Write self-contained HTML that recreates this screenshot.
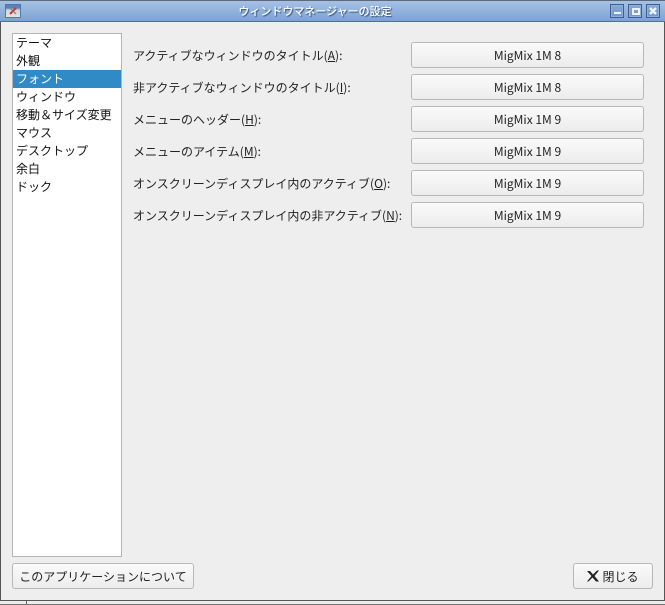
<!DOCTYPE html>
<html lang="ja"><head><meta charset="utf-8"><style>
html,body{margin:0;padding:0}
body{width:665px;height:605px;position:relative;overflow:hidden;background:#eeeeee;font:12px/18px "Noto Sans CJK JP","Liberation Sans",sans-serif;color:#1a1a1a}
.a{position:absolute;white-space:nowrap}
#tb{left:0;top:0;width:665px;background:linear-gradient(#a5c2e6,#7da2d3);border-top:1px solid #5e6a7c;border-bottom:1px solid #4f6f9c;height:20px}
#t{left:0;top:2px;width:630px;text-align:center;color:#fff;font-size:11px;font-weight:500;line-height:18px;text-shadow:1px 1px 1px #2f4f7c}
.wb{top:4px;width:12px;height:12px;border:1px solid #3d5f8e;box-shadow:inset 0 0 0 1px #8fb0da;background:linear-gradient(#86a8d6,#7297cc)}
#l{left:12px;top:33px;width:108px;height:522px;background:#fff;border:1px solid #b4b4b4}
.li{left:13px;width:108px;height:18px;line-height:18px;padding-left:3px;box-sizing:border-box;color:#111}
.sel{background:#2f8ac6;color:#fff}
.lb{left:133px;line-height:18px;color:#222}
.lb u{text-underline-offset:1px}
.b{left:411px;width:233px;height:26px;box-sizing:border-box;border:1px solid #b8b8b8;border-radius:3px;background:linear-gradient(#fafafa,#ececec);text-align:center;line-height:26px;color:#222;font-family:"Noto Sans CJK JP",sans-serif}
#edgeL{left:0;top:22px;width:1px;height:578px;background:#555}
#edgeR{left:664px;top:22px;width:1px;height:578px;background:#555}
#edgeB{left:0;top:600px;width:665px;height:1px;background:#555}
#edgeB2{left:0;top:601px;width:665px;height:3px;background:#ececec}
#edgeB3{left:0;top:604px;width:665px;height:1px;background:#777}
</style></head><body>
<div class="a" id="tb"></div>
<div class="a" style="left:5px;top:4px;width:16px;height:14px;background:linear-gradient(#5a82b6 0,#5a82b6 3px,#cfd6dc 5px,#e6e4de);border:1px solid #4f79ad;box-sizing:border-box"></div>
<svg class="a" style="left:5px;top:4px" width="16" height="14" viewBox="0 0 16 14"><path d="M5 10l6-6" stroke="#c23a48" stroke-width="2" fill="none"/><path d="M5 4l2 2M9 8l2 2" stroke="#8a8a8a" stroke-width="1.500" fill="none"/></svg>
<div class="a" id="t">ウィンドウマネージャーの設定</div>
<div class="a wb" style="left:610px"></div><div class="a" style="left:614px;top:12px;width:7px;height:2px;background:#f0f4fa"></div>
<div class="a wb" style="left:628px"></div><div class="a" style="left:632px;top:8px;width:4px;height:3px;border:2px solid #f0f4fa;border-top-width:2px"></div>
<div class="a wb" style="left:646px"></div>
<svg class="a" style="left:646px;top:4px" width="14" height="14" viewBox="0 0 14 14"><path d="M4 4l6 6M10 4l-6 6" stroke="#f0f4fa" stroke-width="2.500" fill="none"/></svg>
<div class="a" id="edgeL"></div><div class="a" id="edgeR"></div><div class="a" id="edgeB"></div><div class="a" id="edgeB2"></div><div class="a" id="edgeB3"></div>
<div class="a" style="left:26px;top:601px;width:1px;height:4px;background:#666"></div>
<div class="a" id="l"></div>
<div class="a li" style="top:34px">テーマ</div>
<div class="a li" style="top:52px">外観</div>
<div class="a li sel" style="top:70px">フォント</div>
<div class="a li" style="top:88px">ウィンドウ</div>
<div class="a li" style="top:106px">移動＆サイズ変更</div>
<div class="a li" style="top:124px">マウス</div>
<div class="a li" style="top:142px">デスクトップ</div>
<div class="a li" style="top:160px">余白</div>
<div class="a li" style="top:178px">ドック</div>
<div class="a lb" style="top:47px">アクティブなウィンドウのタイトル(<u>A</u>):</div>
<div class="a lb" style="top:79px">非アクティブなウィンドウのタイトル(<u>I</u>):</div>
<div class="a lb" style="top:111px">メニューのヘッダー(<u>H</u>):</div>
<div class="a lb" style="top:143px">メニューのアイテム(<u>M</u>):</div>
<div class="a lb" style="top:175px">オンスクリーンディスプレイ内のアクティブ(<u>O</u>):</div>
<div class="a lb" style="top:207px">オンスクリーンディスプレイ内の非アクティブ(<u>N</u>):</div>
<div class="a b" style="top:42px">MigMix 1M 8</div>
<div class="a b" style="top:74px">MigMix 1M 8</div>
<div class="a b" style="top:106px">MigMix 1M 9</div>
<div class="a b" style="top:138px">MigMix 1M 9</div>
<div class="a b" style="top:170px">MigMix 1M 9</div>
<div class="a b" style="top:202px">MigMix 1M 9</div>
<div class="a b" style="left:12px;top:563px;width:182px">このアプリケーションについて</div>
<div class="a b" style="left:573px;top:563px;width:80px;padding-left:15px">閉じる</div>
<svg class="a" style="left:586px;top:569px" width="14" height="14" viewBox="0 0 14 14"><path d="M1 2h3l3 3.500L11 1.500h2L8.500 7 13 12.500h-3L6.500 8.500 2.500 12.500H1L5.500 7z" fill="#222"/></svg>
</body></html>
